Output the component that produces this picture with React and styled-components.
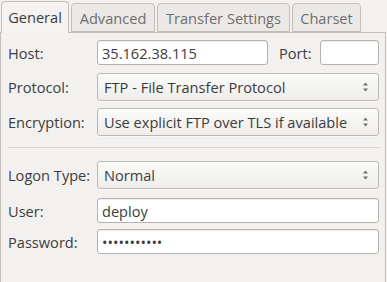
import React from "react";
import styled, { createGlobalStyle } from "styled-components";

const Global = createGlobalStyle`
  html, body { margin: 0; padding: 0; background: #f2f1f0; }
  body {
    font-family: "Open Sans", "DejaVu Sans", sans-serif;
    font-size: 14.6px;
    color: #3c3c3c;
    width: 387px;
    height: 282px;
    overflow: hidden;
  }
  * { box-sizing: border-box; }
`;

const Window = styled.div`
  display: flex;
  flex-direction: column;
  width: 387px;
  height: 282px;
`;

const TabBar = styled.div`
  display: flex;
  align-items: flex-end;
  gap: 2px;
  height: 32px;
  padding-left: 1px;
`;

const Tab = styled.div`
  position: relative;
  z-index: ${(p) => (p.$active ? 2 : 1)};
  display: flex;
  align-items: center;
  justify-content: center;
  width: ${(p) => p.$w}px;
  height: ${(p) => (p.$active ? 32 : 29)}px;
  margin-bottom: ${(p) => (p.$active ? -1 : 0)}px;
  padding-bottom: ${(p) => (p.$active ? 2 : 0)}px;
  border: 1px solid #c3bfb8;
  border-bottom: ${(p) => (p.$active ? "none" : "1px solid #c3bfb8")};
  border-radius: 4px 4px 0 0;
  background: ${(p) => (p.$active ? "#f4f3f2" : "#ebe9e7")};
  color: ${(p) => (p.$active ? "#3c3c3c" : "#6e6e6e")};
  white-space: nowrap;
`;

const Panel = styled.div`
  flex: 1;
  width: 386px;
  border: 1px solid #c3bfb8;
  border-bottom: none;
  background: #f2f1f0;
  padding: 7px 6px 0 6px;
  display: flex;
  flex-direction: column;
`;

const Row = styled.div`
  display: flex;
  align-items: center;
  height: ${(p) => p.$h}px;
  margin-top: ${(p) => p.$mt || 0}px;
`;

const Label = styled.div`
  width: ${(p) => p.$w || 90}px;
  flex: none;
  white-space: nowrap;
  padding-left: 1px;
`;

const InlineLabel = styled.div`
  margin: 0 8px 0 11px;
  white-space: nowrap;
`;

const TextInput = styled.input`
  height: 100%;
  width: ${(p) => (p.$w ? `${p.$w}px` : "auto")};
  flex: ${(p) => (p.$w ? "none" : "1")};
  min-width: 0;
  border: 1px solid #b7b3ac;
  border-radius: 3px;
  background: #ffffff;
  box-shadow: inset 0 1px 1px rgba(0, 0, 0, 0.08);
  padding: 0 4px;
  font: inherit;
  color: #3c3c3c;
  outline: none;
`;

const ComboBox = styled.div`
  flex: 1;
  height: 100%;
  display: flex;
  align-items: center;
  justify-content: space-between;
  padding: 0 9px 0 6px;
  border: 1px solid #bdb9b2;
  border-radius: 3px;
  background: linear-gradient(#fbfbfa, #eeedeb);
  box-shadow: 0 1px 0 rgba(255, 255, 255, 0.6);
  white-space: nowrap;
`;

const Separator = styled.div`
  height: 1px;
  background: #dcdad6;
  margin: ${(p) => p.$mt}px 0 0 1px;
  width: 373px;
`;

const Arrows = () => (
  <svg width="7" height="12" viewBox="0 0 7 12">
    <path d="M3.5 1.5 L6 4.5 H1 Z" fill="#707070" />
    <path d="M3.5 10.5 L6 7.5 H1 Z" fill="#707070" />
  </svg>
);

const Select = ({ children }) => (
  <ComboBox>
    <span>{children}</span>
    <Arrows />
  </ComboBox>
);

export default function App() {
  return (
    <Window>
      <Global />
      <TabBar>
        <Tab $active $w={68}>General</Tab>
        <Tab $w={84}>Advanced</Tab>
        <Tab $w={133}>Transfer Settings</Tab>
        <Tab $w={69}>Charset</Tab>
      </TabBar>
      <Panel>
        <Row $h={25}>
          <Label>Host:</Label>
          <TextInput $w={171} readOnly value="35.162.38.115" />
          <InlineLabel>Port:</InlineLabel>
          <TextInput readOnly value="" />
        </Row>
        <Row $h={28} $mt={8}>
          <Label>Protocol:</Label>
          <Select>FTP - File Transfer Protocol</Select>
        </Row>
        <Row $h={28} $mt={7}>
          <Label>Encryption:</Label>
          <Select>Use explicit FTP over TLS if available</Select>
        </Row>
        <Separator $mt={11} />
        <Row $h={28} $mt={13}>
          <Label>Logon Type:</Label>
          <Select>Normal</Select>
        </Row>
        <Row $h={25} $mt={9}>
          <Label>User:</Label>
          <TextInput readOnly value="deploy" />
        </Row>
        <Row $h={25} $mt={6}>
          <Label>Password:</Label>
          <TextInput type="password" readOnly value="xxxxxxxxxxx" />
        </Row>
      </Panel>
    </Window>
  );
}
